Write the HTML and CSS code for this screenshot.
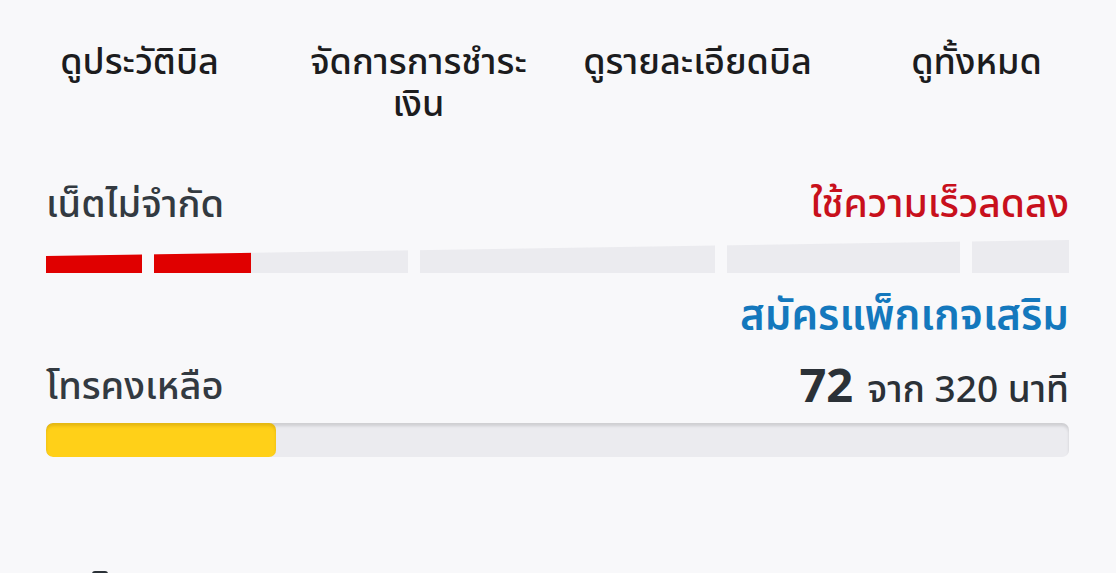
FILE: index.html
```html
<!DOCTYPE html>
<html lang="th">
<head>
    <meta charset="UTF-8">
    <meta name="viewport" content="width=device-width, initial-scale=1.0">
    <title>แพ็กเกจของฉัน</title>
    <link rel="stylesheet" href="styles.css">
</head>
<body>

    <nav class="menu">
        <a class="menu-item" href="#">ดูประวัติบิล</a>
        <a class="menu-item" href="#">จัดการการชำระเงิน</a>
        <a class="menu-item" href="#">ดูรายละเอียดบิล</a>
        <a class="menu-item" href="#">ดูทั้งหมด</a>
    </nav>

    <section class="usage">
        <div class="usage-row">
            <span class="usage-label">เน็ตไม่จำกัด</span>
            <span class="usage-status">ใช้ความเร็วลดลง</span>
        </div>
        <div class="segments">
            <div class="segment seg-1"><div class="segment-fill" style="width: 100%"></div></div>
            <div class="segment seg-2"><div class="segment-fill" style="width: 38%"></div></div>
            <div class="segment seg-3"></div>
            <div class="segment seg-4"></div>
            <div class="segment seg-5"></div>
        </div>
        <div class="usage-link-row">
            <a class="usage-link" href="#">สมัครแพ็กเกจเสริม</a>
        </div>

        <div class="usage-row usage-row-call">
            <span class="usage-label">โทรคงเหลือ</span>
            <span class="usage-amount"><b>72</b> จาก 320 นาที</span>
        </div>
        <div class="track">
            <div class="track-fill" style="width: 22.5%"></div>
        </div>
    </section>

    <section class="next">
        <span class="next-icon"></span>
    </section>

</body>
</html>
```

FILE: styles.css
```css
body {
    margin: 0;
    background-color: #f8f8fa;
    font-family: "Noto Sans Thai", "Noto Sans", Roboto, sans-serif;
    color: #1c1c1e;
}
.menu {
    display: grid;
    grid-template-columns: repeat(4, 1fr);
    padding-top: 42px;
}
.menu-item {
    padding: 0 20px;
    text-align: center;
    font-size: 36px;
    font-weight: 500;
    line-height: 42px;
    color: #1c1c1e;
    text-decoration: none;
}
.usage {
    padding: 59px 47px 0 46px;
}
.usage-row {
    display: flex;
    justify-content: space-between;
    align-items: center;
    height: 40px;
}
.usage-label {
    font-size: 38px;
    font-weight: 500;
    color: #333a41;
}
.usage-status {
    font-size: 39px;
    font-weight: 500;
    color: #c8101c;
}
.segments {
    display: flex;
    gap: 12px;
    height: 33px;
    margin-top: 15px;
    clip-path: polygon(0 16px, 100% 0, 100% 100%, 0 100%);
}
.segment {
    background-color: #ebebef;
    height: 100%;
    overflow: hidden;
}
.seg-1 { width: 96px; }
.seg-2 { width: 254px; }
.seg-3 { width: 295px; }
.seg-4 { width: 233px; }
.seg-5 { flex: 1; }
.segment-fill {
    height: 100%;
    background-color: #e00000;
}
.usage-link-row {
    display: flex;
    justify-content: flex-end;
    height: 44px;
    align-items: center;
    margin-top: 21px;
}
.usage-link {
    font-size: 42px;
    font-weight: 600;
    color: #1478bd;
    text-decoration: none;
}
.usage-row-call {
    height: 48px;
    margin-top: 25px;
}
.usage-amount {
    display: flex;
    align-items: baseline;
    font-size: 37px;
    font-weight: 500;
    color: #2b3137;
}
.usage-amount b {
    font-size: 47px;
    font-weight: 700;
    margin-right: 14px;
}
.track {
    height: 34px;
    margin-top: 12px;
    border-radius: 7px;
    background-color: #ebebef;
    box-shadow: inset 0 3px 3px rgba(0, 0, 0, 0.12);
    overflow: hidden;
}
.track-fill {
    height: 100%;
    border-radius: 7px;
    background-color: #ffd018;
    box-shadow: inset 0 3px 3px rgba(150, 110, 0, 0.25);
}
.next {
    padding: 114px 0 0 92px;
}
.next-icon {
    display: block;
    width: 16px;
    height: 20px;
    background-color: #2b3137;
    border-radius: 3px;
}
```
